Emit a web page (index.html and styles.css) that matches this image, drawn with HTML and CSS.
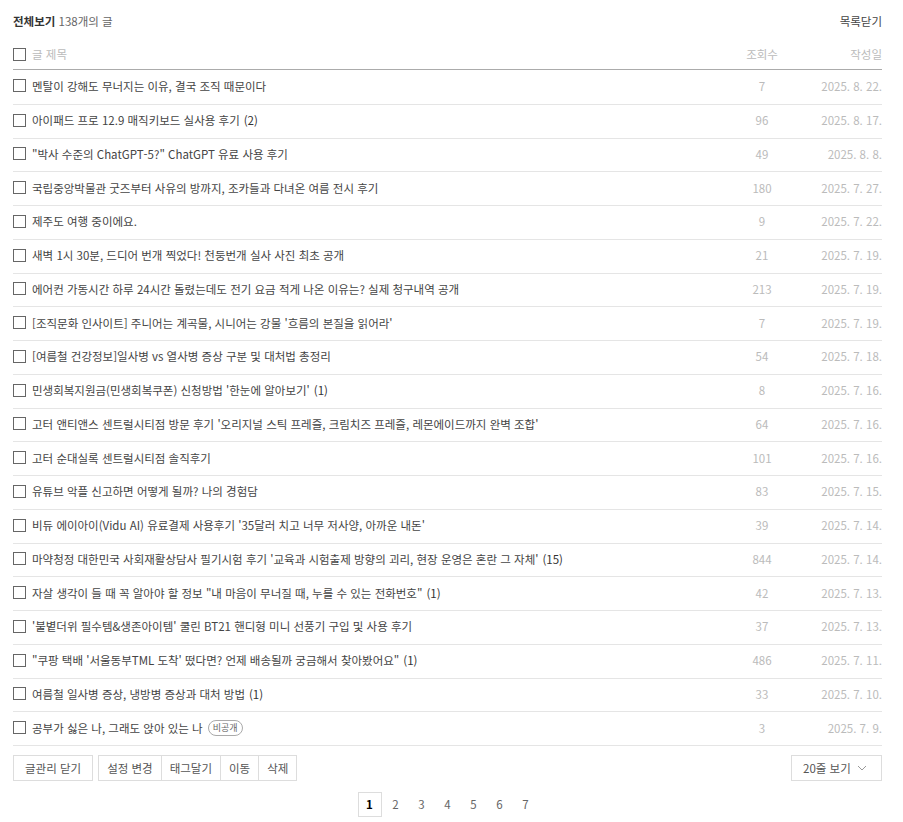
FILE: index.html
```html
<!DOCTYPE html>
<html lang="ko">
<head>
    <meta charset="UTF-8">
    <meta name="viewport" content="width=device-width, initial-scale=1.0">
    <title>글 관리</title>
    <link rel="stylesheet" href="styles.css">
</head>
<body>

    <div class="container">
        <!-- Header -->
        <div class="list-head">
            <div class="list-title"><strong>전체보기</strong> 138개의 글</div>
            <a class="list-close" href="#">목록닫기</a>
        </div>

        <!-- Post list -->
        <div class="post-list">
            <div class="row row-head">
                <div class="col-title"><span class="check"></span>글 제목</div>
                <div class="col-views">조회수</div>
                <div class="col-date">작성일</div>
            </div>
            <div class="row">
                <div class="col-title"><span class="check"></span>멘탈이 강해도 무너지는 이유, 결국 조직 때문이다</div>
                <div class="col-views">7</div>
                <div class="col-date">2025. 8. 22.</div>
            </div>
            <div class="row">
                <div class="col-title"><span class="check"></span>아이패드 프로 12.9 매직키보드 실사용 후기 <span class="cnt">(2)</span></div>
                <div class="col-views">96</div>
                <div class="col-date">2025. 8. 17.</div>
            </div>
            <div class="row">
                <div class="col-title"><span class="check"></span>"박사 수준의 ChatGPT-5?" ChatGPT 유료 사용 후기</div>
                <div class="col-views">49</div>
                <div class="col-date">2025. 8. 8.</div>
            </div>
            <div class="row">
                <div class="col-title"><span class="check"></span>국립중앙박물관 굿즈부터 사유의 방까지, 조카들과 다녀온 여름 전시 후기</div>
                <div class="col-views">180</div>
                <div class="col-date">2025. 7. 27.</div>
            </div>
            <div class="row">
                <div class="col-title"><span class="check"></span>제주도 여행 중이에요.</div>
                <div class="col-views">9</div>
                <div class="col-date">2025. 7. 22.</div>
            </div>
            <div class="row">
                <div class="col-title"><span class="check"></span>새벽 1시 30분, 드디어 번개 찍었다! 천둥번개 실사 사진 최초 공개</div>
                <div class="col-views">21</div>
                <div class="col-date">2025. 7. 19.</div>
            </div>
            <div class="row">
                <div class="col-title"><span class="check"></span>에어컨 가동시간 하루 24시간 돌렸는데도 전기 요금 적게 나온 이유는? 실제 청구내역 공개</div>
                <div class="col-views">213</div>
                <div class="col-date">2025. 7. 19.</div>
            </div>
            <div class="row">
                <div class="col-title"><span class="check"></span>[조직문화 인사이트] 주니어는 계곡물, 시니어는 강물 '흐름의 본질을 읽어라'</div>
                <div class="col-views">7</div>
                <div class="col-date">2025. 7. 19.</div>
            </div>
            <div class="row">
                <div class="col-title"><span class="check"></span>[여름철 건강정보]일사병 vs 열사병 증상 구분 및 대처법 총정리</div>
                <div class="col-views">54</div>
                <div class="col-date">2025. 7. 18.</div>
            </div>
            <div class="row">
                <div class="col-title"><span class="check"></span>민생회복지원금(민생회복쿠폰) 신청방법 '한눈에 알아보기' <span class="cnt">(1)</span></div>
                <div class="col-views">8</div>
                <div class="col-date">2025. 7. 16.</div>
            </div>
            <div class="row">
                <div class="col-title"><span class="check"></span>고터 앤티앤스 센트럴시티점 방문 후기 '오리지널 스틱 프레즐, 크림치즈 프레즐, 레몬에이드까지 완벽 조합'</div>
                <div class="col-views">64</div>
                <div class="col-date">2025. 7. 16.</div>
            </div>
            <div class="row">
                <div class="col-title"><span class="check"></span>고터 순대실록 센트럴시티점 솔직후기</div>
                <div class="col-views">101</div>
                <div class="col-date">2025. 7. 16.</div>
            </div>
            <div class="row">
                <div class="col-title"><span class="check"></span>유튜브 악플 신고하면 어떻게 될까? 나의 경험담</div>
                <div class="col-views">83</div>
                <div class="col-date">2025. 7. 15.</div>
            </div>
            <div class="row">
                <div class="col-title"><span class="check"></span>비듀 에이아이(Vidu AI) 유료결제 사용후기 '35달러 치고 너무 저사양, 아까운 내돈'</div>
                <div class="col-views">39</div>
                <div class="col-date">2025. 7. 14.</div>
            </div>
            <div class="row">
                <div class="col-title"><span class="check"></span>마약청정 대한민국 사회재활상담사 필기시험 후기 '교육과 시험출제 방향의 괴리, 현장 운영은 혼란 그 자체' <span class="cnt">(15)</span></div>
                <div class="col-views">844</div>
                <div class="col-date">2025. 7. 14.</div>
            </div>
            <div class="row">
                <div class="col-title"><span class="check"></span>자살 생각이 들 때 꼭 알아야 할 정보 "내 마음이 무너질 때, 누를 수 있는 전화번호" <span class="cnt">(1)</span></div>
                <div class="col-views">42</div>
                <div class="col-date">2025. 7. 13.</div>
            </div>
            <div class="row">
                <div class="col-title"><span class="check"></span>'불볕더위 필수템&amp;생존아이템' 쿨린 BT21 핸디형 미니 선풍기 구입 및 사용 후기</div>
                <div class="col-views">37</div>
                <div class="col-date">2025. 7. 13.</div>
            </div>
            <div class="row">
                <div class="col-title"><span class="check"></span>"쿠팡 택배 '서울동부TML 도착' 떴다면? 언제 배송될까 궁금해서 찾아봤어요" <span class="cnt">(1)</span></div>
                <div class="col-views">486</div>
                <div class="col-date">2025. 7. 11.</div>
            </div>
            <div class="row">
                <div class="col-title"><span class="check"></span>여름철 일사병 증상, 냉방병 증상과 대처 방법 <span class="cnt">(1)</span></div>
                <div class="col-views">33</div>
                <div class="col-date">2025. 7. 10.</div>
            </div>
            <div class="row">
                <div class="col-title"><span class="check"></span>공부가 싫은 나, 그래도 앉아 있는 나 <span class="badge">비공개</span></div>
                <div class="col-views">3</div>
                <div class="col-date">2025. 7. 9.</div>
            </div>
        </div>

        <!-- Actions -->
        <div class="actions">
            <div class="btn-group">
                <button class="btn btn-close">글관리 닫기</button>
            </div>
            <div class="btn-group">
                <button class="btn">설정 변경</button>
                <button class="btn">태그달기</button>
                <button class="btn">이동</button>
                <button class="btn">삭제</button>
            </div>
            <button class="btn select-btn">20줄 보기
                <svg width="10" height="6" viewBox="0 0 10 6"><path d="M1 1l4 4 4-4" fill="none" stroke="#999" stroke-width="1"/></svg>
            </button>
        </div>

        <!-- Paging -->
        <div class="paging">
            <a href="#" class="page current">1</a>
            <a href="#" class="page">2</a>
            <a href="#" class="page">3</a>
            <a href="#" class="page">4</a>
            <a href="#" class="page">5</a>
            <a href="#" class="page">6</a>
            <a href="#" class="page">7</a>
        </div>
    </div>

</body>
</html>
```

FILE: styles.css
```css
body {
    margin: 0;
    background-color: #fff;
    font-family: "Noto Sans CJK KR", "Noto Sans", sans-serif;
    font-size: 11.5px;
    color: #333;
}
.container {
    padding: 0 21px 0 13px;
}
.list-head {
    display: flex;
    justify-content: space-between;
    align-items: center;
    height: 42px;
}
.list-title {
    color: #666;
}
.list-title strong {
    color: #333;
}
.list-close {
    color: #444;
    text-decoration: none;
}
.post-list {
    border-bottom: 1px solid #e5e5e5;
}
.row {
    display: flex;
    align-items: center;
    height: 33.75px;
    box-sizing: border-box;
    padding-bottom: 2px;
    border-top: 1px solid #e5e5e5;
    line-height: 16px;
}
.row-head {
    height: 28px;
    padding-bottom: 3px;
    border-top: none;
    border-bottom: 1px solid #ababab;
    color: #bbb;
}
.row-head + .row {
    border-top: none;
}
.col-title {
    flex: 1;
    display: flex;
    align-items: center;
    white-space: nowrap;
    overflow: hidden;
    color: #444;
}
.row-head .col-title {
    color: #bbb;
}
.check {
    display: inline-block;
    width: 11px;
    height: 11px;
    border: 1px solid #666;
    margin-right: 6px;
    flex: none;
}
.cnt {
    margin-left: 4px;
    color: #333;
}
.badge {
    margin-left: 5px;
    border: 1px solid #aaa;
    border-radius: 9px;
    padding: 0 4px;
    font-size: 9px;
    line-height: 14px;
    color: #666;
}
.col-views {
    width: 60px;
    text-align: center;
    color: #bbb;
}
.col-date {
    width: 90px;
    text-align: right;
    color: #bbb;
}
.actions {
    display: flex;
    align-items: center;
    gap: 5px;
    margin-top: 9px;
}
.btn-group {
    display: flex;
}
.btn {
    height: 26px;
    padding: 0 8px;
    border: 1px solid #ddd;
    background: #fff;
    font-family: inherit;
    font-size: 11.5px;
    color: #555;
    cursor: pointer;
}
.btn-close {
    padding: 0 11px;
}
.btn-group .btn + .btn {
    border-left: none;
}
.select-btn {
    margin-left: auto;
    width: 91px;
    display: flex;
    align-items: center;
    justify-content: space-between;
    padding: 0 14px 0 11px;
}
.paging {
    display: flex;
    justify-content: center;
    align-items: center;
    gap: 2px;
    margin-top: 11px;
}
.page {
    box-sizing: border-box;
    width: 24px;
    height: 25px;
    line-height: 23px;
    text-align: center;
    color: #666;
    text-decoration: none;
    border: 1px solid transparent;
}
.page.current {
    border-color: #ddd;
    color: #000;
    font-weight: bold;
}
```
